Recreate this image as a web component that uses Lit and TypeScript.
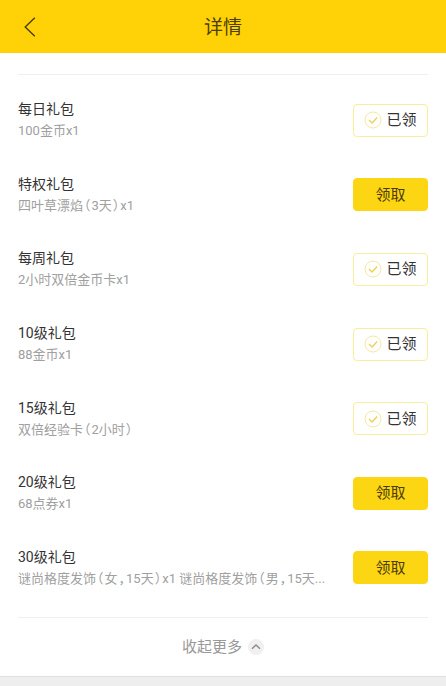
import { LitElement, html, css } from "lit";
import { customElement, property, state } from "lit/decorators.js";

interface Gift {
  name: string;
  detail: string;
  claimed: boolean;
}

const GIFTS: Gift[] = [
  { name: "每日礼包", detail: "100金币x1", claimed: true },
  { name: "特权礼包", detail: "四叶草漂焰（3天）x1", claimed: false },
  { name: "每周礼包", detail: "2小时双倍金币卡x1", claimed: true },
  { name: "10级礼包", detail: "88金币x1", claimed: true },
  { name: "15级礼包", detail: "双倍经验卡（2小时）", claimed: true },
  { name: "20级礼包", detail: "68点券x1", claimed: false },
  { name: "30级礼包", detail: "谜尚格度发饰（女，15天）x1 谜尚格度发饰（男，15天...", claimed: false },
];

@customElement("gift-row")
export class GiftRow extends LitElement {
  @property({ attribute: false }) gift!: Gift;

  static styles = css`
    :host {
      display: flex;
      align-items: center;
      justify-content: space-between;
      gap: 16px;
      flex: 1 0 auto;
    }
    .info {
      min-width: 0;
    }
    .name,
    .detail {
      margin: 0;
      font-weight: 400;
      white-space: nowrap;
    }
    .name {
      font-size: 14px;
      line-height: 22px;
      color: #333;
    }
    .detail {
      font-size: 13px;
      line-height: 22px;
      color: #a0a0a0;
      overflow: hidden;
      text-overflow: ellipsis;
    }
    .mark {
      margin: 0 1px;
      font-feature-settings: "halt";
    }
    .action {
      flex: none;
      display: flex;
      align-items: center;
      justify-content: center;
      gap: 4px;
      box-sizing: border-box;
      width: 75px;
      height: 33px;
      padding: 0;
      border: 1px solid #fdd613;
      border-radius: 4px;
      background: #fdd613;
      color: #4b3d08;
      font: inherit;
      font-size: 15px;
      line-height: 20px;
    }
    .action.claimed {
      background: #fff;
      border-color: #f8ee9c;
      color: #333;
    }
    .tick {
      width: 18px;
      height: 18px;
    }
  `;

  /* Full-width brackets and commas are set at half width. */
  private detail() {
    return this.gift.detail
      .split(/([（），])/)
      .map((part) => (/^[（），]$/.test(part) ? html`<span class="mark">${part}</span>` : part));
  }

  render() {
    const tick = html`<svg class="tick" viewBox="0 0 18 18" fill="none" aria-hidden="true">
      <circle cx="9" cy="9" r="8" stroke="#f6e9a0" />
      <path d="M5 9 8 12 13.2 6.4" stroke="#efcf55" stroke-width="1.4" />
    </svg>`;
    return html`
      <div class="info">
        <h2 class="name">${this.gift.name}</h2>
        <p class="detail">${this.detail()}</p>
      </div>
      ${this.gift.claimed
        ? html`<button class="action claimed" type="button">${tick}已领</button>`
        : html`<button class="action" type="button">领取</button>`}
    `;
  }
}

@customElement("app-root")
export class AppRoot extends LitElement {
  @state() private gifts = GIFTS;

  static styles = css`
    :host {
      display: flex;
      flex-direction: column;
      min-height: 100vh;
      background: #fff;
      font-family: Roboto, "Noto Sans CJK SC", sans-serif;
    }
    .bar {
      display: grid;
      grid-template-columns: 60px 1fr 60px;
      align-items: center;
      height: 53px;
      background: #ffd106;
      color: #4b3d08;
    }
    .back {
      display: flex;
      align-items: center;
      justify-content: center;
      height: 100%;
      padding: 0;
      border: 0;
      background: none;
      color: inherit;
    }
    .back svg {
      width: 12px;
      height: 20px;
    }
    .title {
      margin: 0;
      font-size: 19px;
      line-height: 30px;
      padding-top: 2px;
      font-weight: 400;
      text-align: center;
    }
    .gifts {
      flex: 1 0 auto;
      display: flex;
      flex-direction: column;
      margin: 21px 18px 0;
      padding: 8px 0 12px;
      border: solid #efefef;
      border-width: 1px 0;
    }
    .gifts gift-row {
      min-height: 60px;
    }
    .more {
      display: flex;
      align-items: center;
      justify-content: center;
      gap: 6px;
      height: 58px;
      padding: 0;
      border: 0;
      background: none;
      color: #999;
      font: inherit;
      font-size: 15px;
      line-height: 20px;
    }
    .more svg {
      width: 16px;
      height: 16px;
    }
    .gap {
      height: 9px;
      border-top: 1px solid #e0e0e0;
      background: #eee;
    }
  `;

  render() {
    return html`
      <header class="bar">
        <button class="back" type="button" aria-label="返回">
          <svg viewBox="0 0 12 20" fill="none" aria-hidden="true">
            <path d="M10.8 .8 1.2 10l9.6 9.2" stroke="currentColor" stroke-width="1.4" />
          </svg>
        </button>
        <h1 class="title">详情</h1>
      </header>
      <main class="gifts">${this.gifts.map((gift) => html`<gift-row .gift=${gift}></gift-row>`)}</main>
      <button class="more" type="button">
        收起更多
        <svg viewBox="0 0 16 16" fill="none" aria-hidden="true">
          <circle cx="8" cy="8" r="8" fill="#f0f0f0" />
          <path d="m4 9.8 4-3.8 4 3.8" stroke="#888" stroke-width="1.3" />
        </svg>
      </button>
      <div class="gap"></div>
    `;
  }
}
